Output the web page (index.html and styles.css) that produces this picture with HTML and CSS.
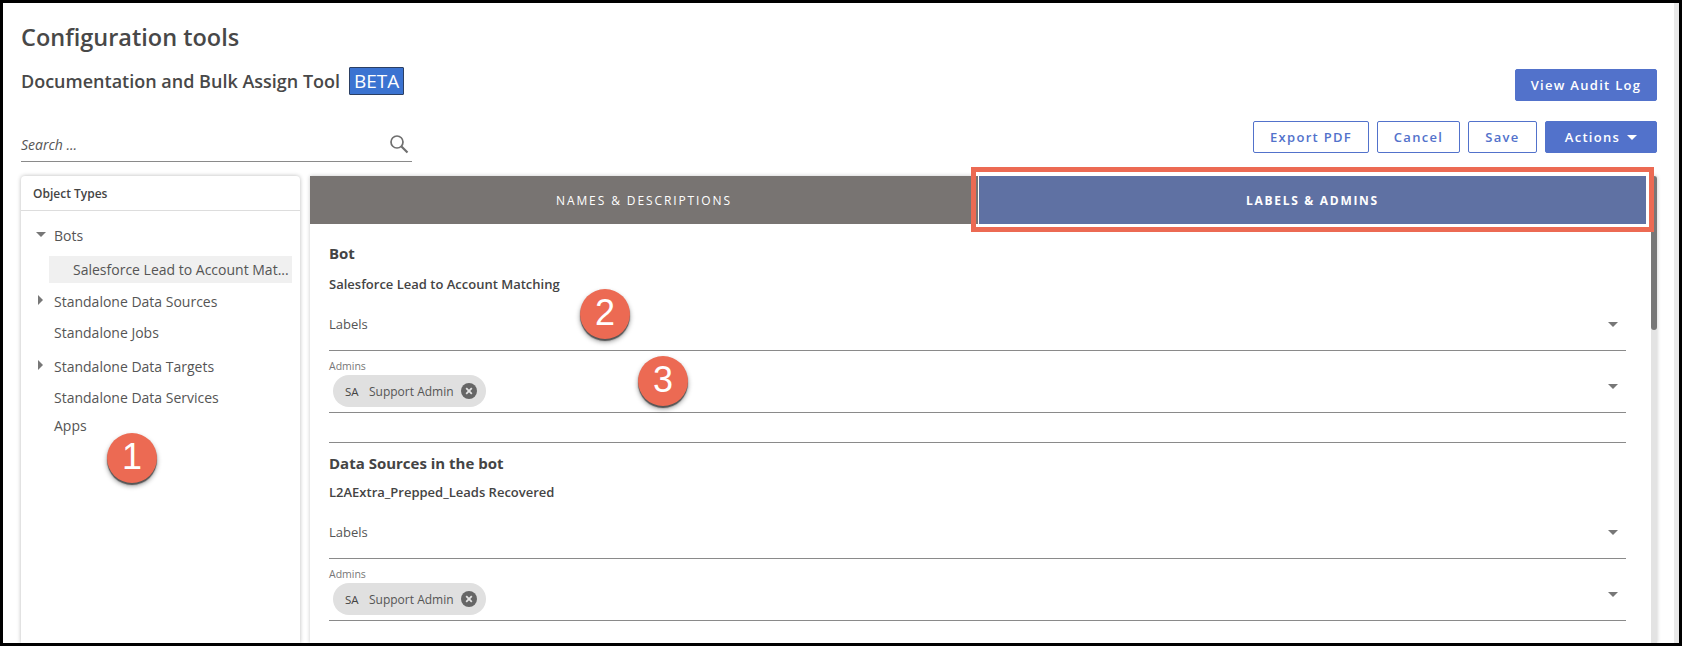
FILE: index.html
```html
<!DOCTYPE html>
<html lang="en">
<head>
<meta charset="utf-8">
<title>Configuration tools</title>
<link rel="stylesheet" href="styles.css">
</head>
<body>
<div class="frame">
  <div class="head">
    <div class="titles">
      <h1 class="title">Configuration tools</h1>
      <div class="subtitle"><span>Documentation and Bulk Assign Tool</span><span class="beta">BETA</span></div>
    </div>
    <div class="audit"><button class="btn solid">View Audit Log</button></div>
  </div>
  <div class="toolbar">
    <div class="search">
      <span>Search ...</span>
      <svg class="search-icon" width="20" height="20" viewBox="0 0 20 20"><circle cx="8" cy="8" r="6" fill="none" stroke="#6f6f6f" stroke-width="1.7"/><path d="M12.5 12.5L18.5 18.5" stroke="#6f6f6f" stroke-width="2.2"/></svg>
    </div>
    <div class="actions">
      <button class="btn outline export">Export PDF</button>
      <button class="btn outline cancel">Cancel</button>
      <button class="btn outline save">Save</button>
      <button class="btn solid act">Actions<i class="btn-caret"></i></button>
    </div>
  </div>
  <div class="columns">
    <aside class="side">
      <div class="side-head">Object Types</div>
      <ul class="tree">
        <li class="node n-bots"><i class="tw down"></i>Bots</li>
        <li class="node selected">Salesforce Lead to Account Mat...</li>
        <li class="node n-src"><i class="tw right"></i>Standalone Data Sources</li>
        <li class="node n-jobs">Standalone Jobs</li>
        <li class="node n-tgt"><i class="tw right"></i>Standalone Data Targets</li>
        <li class="node n-svc">Standalone Data Services</li>
        <li class="node n-apps">Apps</li>
      </ul>
    </aside>
    <main class="main">
      <div class="tabs">
        <div class="tab off">NAMES &amp; DESCRIPTIONS</div>
        <div class="tab on">LABELS &amp; ADMINS</div>
      </div>
      <div class="scroll">
        <section class="group first">
          <h2 class="g-title">Bot</h2>
          <div class="g-name">Salesforce Lead to Account Matching</div>
          <div class="field labels"><span>Labels</span><i class="caret"></i></div>
          <div class="field admins">
            <div class="mini">Admins</div>
            <div class="chip"><span class="ini">SA</span><span>Support Admin</span>
              <svg class="x" width="16" height="16" viewBox="0 0 16 16"><circle cx="8" cy="8" r="8" fill="#666"/><path d="M5.2 5.2L10.8 10.8M10.8 5.2L5.2 10.8" stroke="#e4e4e4" stroke-width="1.8"/></svg>
            </div>
            <i class="caret"></i>
          </div>
        </section>
        <section class="group second">
          <h2 class="g-title">Data Sources in the bot</h2>
          <div class="g-name">L2AExtra_Prepped_Leads Recovered</div>
          <div class="field labels"><span>Labels</span><i class="caret"></i></div>
          <div class="field admins">
            <div class="mini">Admins</div>
            <div class="chip"><span class="ini">SA</span><span>Support Admin</span>
              <svg class="x" width="16" height="16" viewBox="0 0 16 16"><circle cx="8" cy="8" r="8" fill="#666"/><path d="M5.2 5.2L10.8 10.8M10.8 5.2L5.2 10.8" stroke="#e4e4e4" stroke-width="1.8"/></svg>
            </div>
            <i class="caret"></i>
          </div>
        </section>
      </div>
      <div class="scrollbar"><div class="thumb"></div></div>
    </main>
  </div>
  <div class="highlight"></div>
  <div class="bubble b1">1</div>
  <div class="bubble b2">2</div>
  <div class="bubble b3">3</div>
</div>
</body>
</html>
```

FILE: styles.css
```css
* { box-sizing: border-box; }
html, body { margin: 0; padding: 0; }
body { width: 1682px; height: 646px; overflow: hidden; background: #000; font-family: "Open Sans", "Liberation Sans", sans-serif; color: #444; }
.frame { position: relative; margin: 3px 3px 3px 3px; width: 1676px; height: 640px; background: #fff; border-right: 5px solid #e9e9e9; overflow: hidden; }

.head { display: flex; justify-content: space-between; padding: 0 17px 0 18px; height: 105px; }
.title { margin: 0; padding-top: 18px; font-size: 23.5px; line-height: 32px; font-weight: 600; color: #484848; }
.subtitle { display: flex; align-items: center; margin-top: 14px; font-size: 18px; line-height: 28px; font-weight: 600; color: #484848; }
.beta { margin-left: 9px; height: 28px; width: 55px; text-align: center; background: #3b73d1; border: 1px solid #2b3f63; border-radius: 1px; color: #fff; font-size: 19px; font-weight: 400; line-height: 26px; }
.audit { padding-top: 66px; }

.btn { display: inline-block; height: 32px; border-radius: 2px; font-family: inherit; font-size: 13px; font-weight: 600; letter-spacing: 1.3px; padding: 0; }
.solid { background: #5272cb; border: 1px solid #5272cb; color: #fff; }
.outline { background: #fff; border: 1px solid #5272cb; color: #5272cb; }
.audit .btn { width: 142px; }

.toolbar { display: flex; justify-content: space-between; padding: 13px 17px 0 18px; height: 68px; }
.search { position: relative; width: 391px; height: 41px; border-bottom: 1px solid #8a8a8a; font-size: 14px; font-style: italic; line-height: 18px; color: #555; padding-top: 15px; }
.search-icon { position: absolute; right: 3px; top: 13px; }
.actions { display: flex; gap: 8px; height: 32px; }
.export { width: 116px; }
.cancel { width: 83px; }
.save { width: 69px; }
.act { width: 112px; }
.btn-caret { display: inline-block; margin-left: 7px; vertical-align: 2px; border-left: 5px solid transparent; border-right: 5px solid transparent; border-top: 5px solid #fff; }

.columns { display: flex; gap: 10px; padding-left: 18px; height: 467px; }
.side { width: 279px; height: 467px; background: #fff; border-radius: 4px 4px 0 0; box-shadow: 0 0 4px rgba(0,0,0,.28); }
.side-head { height: 35px; padding-left: 12px; padding-top: 1px; border-bottom: 1px solid #ddd; font-size: 12px; line-height: 34px; font-weight: 600; color: #444; }
.tree { list-style: none; margin: 0; padding: 0; }
.node { position: relative; padding-left: 33px; font-size: 14px; line-height: 20px; color: #555; white-space: nowrap; }
.n-bots { margin-top: 15px; }
.selected { margin: 10px 8px 0 28px; height: 27px; padding-left: 24px; line-height: 27px; background: #f0f0f0; }
.n-src { margin-top: 9px; }
.n-jobs { margin-top: 11px; }
.n-tgt { margin-top: 14px; }
.n-svc { margin-top: 11px; }
.n-apps { margin-top: 8px; }
.tw { position: absolute; width: 0; height: 0; }
.down { left: 15px; top: 6px; border-left: 5px solid transparent; border-right: 5px solid transparent; border-top: 5px solid #777; }
.right { left: 17px; top: 3px; border-top: 5px solid transparent; border-bottom: 5px solid transparent; border-left: 5px solid #777; }

.main { position: relative; flex: 0 0 1347px; width: 1347px; height: 467px; background: #fff; box-shadow: 0 0 4px rgba(0,0,0,.22); overflow: hidden; }
.tabs { display: flex; height: 48px; }
.tab { display: flex; align-items: center; justify-content: center; font-size: 12px; letter-spacing: 1.9px; color: #fff; }
.off { flex: 0 0 669px; background: #787472; border-right: 1px solid #fff; }
.on { flex: 0 0 667px; background: #5f71a3; font-weight: 700; letter-spacing: 1.7px; }
.scroll { padding: 0 31px 0 19px; }
.group.first { padding-top: 19px; height: 219px; border-bottom: 1px solid #8a8a8a; }
.group.second { padding-top: 10px; }
.g-title { margin: 0; font-size: 15px; line-height: 20px; font-weight: 700; color: #444; }
.g-name { margin-top: 10px; font-size: 13px; line-height: 18px; font-weight: 600; color: #444; }
.first .g-name { margin-top: 12px; }
.field { position: relative; border-bottom: 1px solid #8a8a8a; }
.labels { height: 58px; padding-top: 21px; font-size: 13px; line-height: 20px; color: #555; }
.admins { height: 62px; padding-top: 8px; }
.mini { font-size: 10.5px; line-height: 14px; color: #777; }
.chip { display: inline-flex; align-items: center; margin: 2px 0 0 4px; width: 153px; height: 32px; border-radius: 16px; background: #e0e0e0; padding-left: 12px; font-size: 12px; color: #555; }
.ini { width: 24px; font-size: 11.5px; font-weight: 400; color: #444; }
.x { margin-left: 7px; flex: none; }
.caret { position: absolute; right: 8px; top: 29px; border-left: 5px solid transparent; border-right: 5px solid transparent; border-top: 5px solid #777; }
.admins .caret { top: 33px; }
.scrollbar { position: absolute; right: 0; top: 0; bottom: 0; width: 6px; background: #e3e3e3; }
.thumb { height: 154px; background: #777; border-radius: 3px; }

.highlight { position: absolute; left: 968px; top: 164px; width: 683px; height: 65px; border: 5px solid #ec6a53; }
.highlight::before { content: ""; position: absolute; inset: 0; border-style: solid; border-color: #fff; border-width: 4px 3px 3px 0; }
.bubble { position: absolute; width: 50px; height: 50px; border-radius: 50%; background: #ec6a53; color: #fff; font-family: "Liberation Sans", Arial, sans-serif; font-size: 36px; line-height: 48px; text-align: center; box-shadow: 0 2px 1px #555, 0 3px 5px rgba(0,0,0,.4); }
.b1 { left: 104px; top: 430px; }
.b2 { left: 577px; top: 286px; }
.b3 { left: 635px; top: 353px; }
```
